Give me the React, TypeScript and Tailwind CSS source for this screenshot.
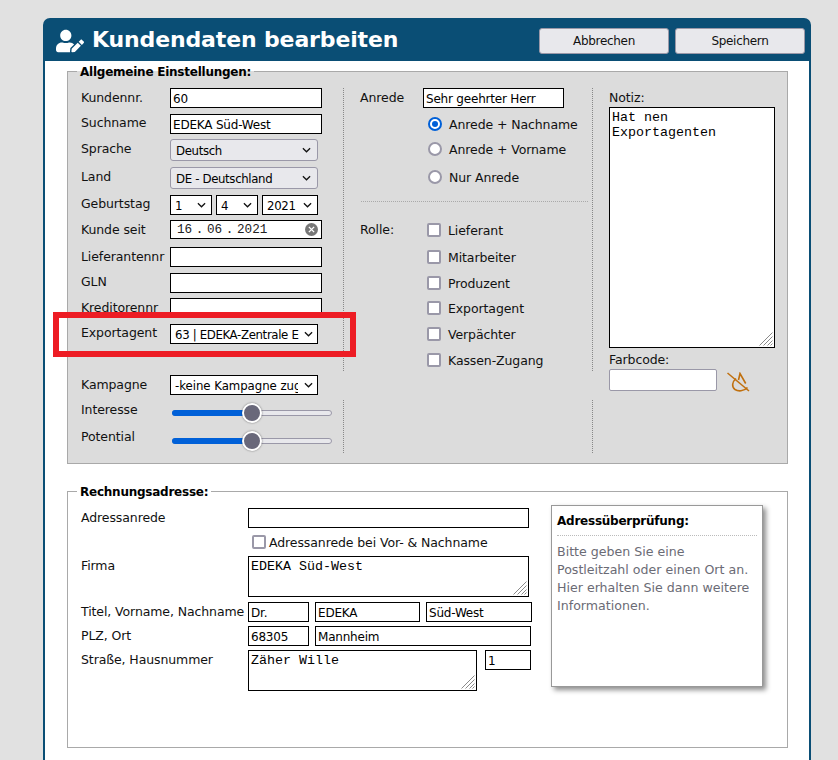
import { FaUserEdit } from "react-icons/fa";

const txt = "text-[12.5px] leading-[18px] tracking-[-0.1px]";
const legendCls = "ml-[9px] h-[15px] px-[3px] text-[12px] font-bold leading-[17px] tracking-[-0.24px] text-black";
const inputCls =
  "block h-5 border border-black bg-white px-[2px] pt-[2px] text-[12px] leading-[16px] tracking-[-0.2px] text-black outline-none";
const monoCls =
  "block resize-none border border-black bg-white px-[2px] py-[2px] font-['Liberation_Mono',monospace] text-[13.33px] leading-[15px] text-black outline-none";

function Chevron({ className }: { className: string }) {
  return (
    <svg viewBox="0 0 10 6" className={className} fill="none" stroke="#111" strokeWidth="1.4">
      <path d="M1 1l4 4 4-4" />
    </svg>
  );
}

function Grip() {
  return (
    <svg viewBox="0 0 14 14" className="pointer-events-none absolute bottom-[2px] right-[2px] h-[14px] w-[14px]" stroke="#8a8a8a" strokeWidth="1">
      <path d="M0.5 13.5L13.5 0.5M4.5 13.5L13.5 4.5M8.5 13.5L13.5 8.5M11.5 13.5L13.5 11.5" />
    </svg>
  );
}

function Area({ value, box }: { value: string; box: string }) {
  return (
    <div className="relative">
      <textarea readOnly value={value} className={`${monoCls} ${box}`} />
      <Grip />
    </div>
  );
}

function Select({
  value,
  box,
  pad,
  chevron,
}: {
  value: string;
  box: string;
  pad: string;
  chevron: string;
}) {
  return (
    <div className="relative">
      <select
        defaultValue={value}
        className={`block appearance-none text-[11.75px] tracking-[-0.35px] text-black outline-none ${box} ${pad}`}
      >
        <option>{value}</option>
      </select>
      <Chevron className={`pointer-events-none absolute top-1/2 h-[6px] w-[9px] -translate-y-1/2 ${chevron}`} />
    </div>
  );
}

function Row({ label, lab, mt, children }: { label: string; lab: string; mt: string; children: React.ReactNode }) {
  return (
    <div className={`flex items-start ${mt}`}>
      <span className={`w-[89px] shrink-0 whitespace-nowrap ${txt} ${lab}`}>{label}</span>
      {children}
    </div>
  );
}

function Radio({ label, checked, mt }: { label: string; checked?: boolean; mt: string }) {
  return (
    <div className={`flex h-[14px] items-center gap-[7px] pl-[84px] ${mt}`}>
      <span
        className={`flex h-[14px] w-[14px] items-center justify-center rounded-full border-2 bg-white ${
          checked ? "border-[#0060d8]" : "border-[#9a98a8]"
        }`}
      >
        {checked && <span className="h-[6px] w-[6px] rounded-full bg-[#0060d8]" />}
      </span>
      <span className={`mt-px whitespace-nowrap ${txt}`}>{label}</span>
    </div>
  );
}

function Check({ label, mt }: { label: string; mt: string }) {
  return (
    <div className={`flex h-[14px] items-center gap-[7px] ${mt}`}>
      <span className="h-[14px] w-[14px] rounded-[2px] border-2 border-[#9a98a8] bg-white" />
      <span className={`mt-px whitespace-nowrap ${txt}`}>{label}</span>
    </div>
  );
}

function Slider() {
  return (
    <div className="relative ml-[2px] mt-[10px] h-[6px] w-[160px] rounded-full border border-[#9a98a8] bg-[#e8e8ec]">
      <div className="absolute -inset-px right-1/2 rounded-l-full bg-[#0060d8]" />
      <div className="absolute left-1/2 top-1/2 h-5 w-5 -translate-x-1/2 -translate-y-1/2 rounded-full border-2 border-white bg-[#69687a] shadow-[0_0_2px_rgba(0,0,0,0.5)]" />
    </div>
  );
}

export default function App() {
  return (
    <div className="relative h-[760px] overflow-hidden bg-[#e1e1e1] pl-[43px] pt-[18px] font-['DejaVu_Sans',sans-serif] text-[#111]">
      <div className="h-[760px] w-[768px] rounded-t-[7px] border-2 border-[#0a4e75] bg-white">
        <header className="flex h-[41px] items-center bg-[#0a4e75] pl-[11px] pr-[4px]">
          <FaUserEdit size={28} color="#fff" className="shrink-0" />
          <h1 className="-mt-[2px] ml-[8px] text-[22px] font-bold leading-7 tracking-[-0.14px] text-white">
            Kundendaten bearbeiten
          </h1>
          <div className="ml-auto mt-[1px] flex gap-[6px]">
            <button className="h-[26px] w-[130px] rounded-[3px] border border-[#9a98a8] bg-[#e8e8ec] text-[12px] tracking-[-0.3px] text-[#111]">
              Abbrechen
            </button>
            <button className="h-[26px] w-[130px] rounded-[3px] border border-[#9a98a8] bg-[#e8e8ec] text-[12px] tracking-[-0.3px] text-[#111]">
              Speichern
            </button>
          </div>
        </header>

        <div className="pl-[22px] pt-[3px]">
          <fieldset className="h-[400px] w-[721px] border border-[#a9a9a9] bg-[#dcdcdc]">
            <legend className={legendCls}>Allgemeine Einstellungen:</legend>
            <div className="mt-[9px] flex h-[283px]">
              <div className="w-[276px] border-r border-dotted border-[#888] pl-[13px]">
                <Row label="Kundennr." lab="mt-px" mt="">
                  <input readOnly value="60" className={`${inputCls} w-[152px]`} />
                </Row>
                <Row label="Suchname" lab="" mt="mt-[6px]">
                  <input readOnly value="EDEKA Süd-West" className={`${inputCls} w-[152px]`} />
                </Row>
                <Row label="Sprache" lab="mt-px" mt="mt-[5px]">
                  <Select
                    value="Deutsch"
                    box="h-[22px] w-[148px] rounded-[3px] border border-[#9a98a8] bg-[#e8e8ec]"
                    pad="pl-[5px] pr-5 pt-[3px]"
                    chevron="right-[7px]"
                  />
                </Row>
                <Row label="Land" lab="mt-px" mt="mt-[6px]">
                  <Select
                    value="DE - Deutschland"
                    box="h-[22px] w-[148px] rounded-[3px] border border-[#9a98a8] bg-[#e8e8ec]"
                    pad="pl-[5px] pr-5 pt-[3px]"
                    chevron="right-[7px]"
                  />
                </Row>
                <Row label="Geburtstag" lab="" mt="mt-[6px]">
                  <div className="flex gap-1">
                    <Select value="1" box="h-5 w-[42px] border border-black bg-white" pad="pl-1 pr-4 pt-[2px]" chevron="right-[6px]" />
                    <Select value="4" box="h-5 w-[42px] border border-black bg-white" pad="pl-1 pr-4 pt-[2px]" chevron="right-[6px]" />
                    <Select value="2021" box="h-5 w-[56px] border border-black bg-white" pad="pl-1 pr-4 pt-[2px]" chevron="right-[6px]" />
                  </div>
                </Row>
                <Row label="Kunde seit" lab="mt-px" mt="mt-[5px]">
                  <div className="relative">
                    <input
                      readOnly
                      value="16 . 06 . 2021"
                      className="block h-[19px] w-[152px] border border-black bg-white pl-[6px] font-['Liberation_Mono',monospace] text-[12.67px] text-[#222] outline-none [word-spacing:-4px]"
                    />
                    <span className="absolute right-[4px] top-[3px] flex h-[13px] w-[13px] items-center justify-center rounded-full bg-[#777]">
                      <svg viewBox="0 0 8 8" className="h-[7px] w-[7px]" stroke="#fff" strokeWidth="1.6">
                        <path d="M1 1l6 6M7 1L1 7" />
                      </svg>
                    </span>
                  </div>
                </Row>
                <Row label="Lieferantennr" lab="mt-px" mt="mt-[8px]">
                  <input readOnly className={`${inputCls} w-[152px]`} />
                </Row>
                <Row label="GLN" lab="" mt="mt-[6px]">
                  <input readOnly className={`${inputCls} w-[152px]`} />
                </Row>
                <Row label="Kreditorennr" lab="mt-px" mt="mt-[5px]">
                  <input readOnly className={`${inputCls} w-[152px]`} />
                </Row>
                <Row label="Exportagent" lab="" mt="mt-[6px]">
                  <Select
                    value="63 | EDEKA-Zentrale EDEKA-Zentrale"
                    box="h-5 w-[148px] border border-black bg-white"
                    pad="pl-1 pr-[18px] pt-[2px]"
                    chevron="right-[5px]"
                  />
                </Row>
              </div>

              <div className="w-[249px] border-r border-dotted border-[#888]">
                <div className="flex items-start pl-4">
                  <span className={`mt-px w-[63px] ${txt}`}>Anrede</span>
                  <input readOnly value="Sehr geehrter Herr" className={`${inputCls} w-[141px]`} />
                </div>
                <Radio label="Anrede + Nachname" checked mt="mt-[9px]" />
                <Radio label="Anrede + Vorname" mt="mt-[11px]" />
                <Radio label="Nur Anrede" mt="mt-[14px]" />
                <div className="ml-[17px] mt-[17px] w-[227px] border-t border-dotted border-[#aaa]" />
                <div className="flex items-start pl-4 pt-[21px]">
                  <span className={`-mt-[2px] w-[67px] ${txt}`}>Rolle:</span>
                  <div>
                    <Check label="Lieferant" mt="" />
                    <Check label="Mitarbeiter" mt="mt-[13px]" />
                    <Check label="Produzent" mt="mt-3" />
                    <Check label="Exportagent" mt="mt-[11px]" />
                    <Check label="Verpächter" mt="mt-3" />
                    <Check label="Kassen-Zugang" mt="mt-3" />
                  </div>
                </div>
              </div>

              <div className="pl-4">
                <div className={`h-[19px] pt-px ${txt}`}>Notiz:</div>
                <Area value={"Hat nen\nExportagenten"} box="h-[241px] w-[166px]" />
                <div className={`mt-[3px] h-[18px] ${txt}`}>Farbcode:</div>
                <div className="flex items-start">
                  <input readOnly className="block h-[22px] w-[108px] rounded-[2px] border border-[#9a98a8] bg-white outline-none" />
                  <svg viewBox="0 0 23 20" className="ml-[10px] mt-[3px] h-[20px] w-[23px]" fill="none" stroke="#c0700f" strokeWidth="1.6">
                    <path d="M0.5 1L22 19" />
                    <path d="M11.5 8L13 1.5L18.7 11.5" />
                    <path d="M9 6.5C5 10 4.5 15 8 17.5C11 19.5 17 19.5 20.5 15.5" />
                  </svg>
                </div>
              </div>
            </div>

            <div className="mt-[4px] flex pl-[13px]">
              <span className={`mt-px w-[89px] ${txt}`}>Kampagne</span>
              <Select
                value="-keine Kampagne zugeordnet"
                box="h-5 w-[148px] border border-black bg-white !tracking-[-0.05px]"
                pad="pl-1 pr-[19px] pt-[2px]"
                chevron="right-[5px]"
              />
            </div>

            <div className="mt-[5px] flex h-[53px]">
              <div className="w-[276px] border-r border-dotted border-[#888] pl-[13px]">
                <div className="flex">
                  <span className={`mt-px w-[89px] ${txt}`}>Interesse</span>
                  <Slider />
                </div>
                <div className="mt-[9px] flex">
                  <span className={`w-[89px] ${txt}`}>Potential</span>
                  <Slider />
                </div>
              </div>
              <div className="w-[249px] border-r border-dotted border-[#888]" />
            </div>
          </fieldset>

          <fieldset className="mt-5 h-[264px] w-[721px] border border-[#a9a9a9] bg-white">
            <legend className={legendCls}>Rechnungsadresse:</legend>
            <div className="flex pl-[13px]">
              <div className="w-[451px] pt-[9px]">
                <div className="flex items-start">
                  <span className={`mt-px w-[167px] ${txt}`}>Adressanrede</span>
                  <input readOnly className={`${inputCls} w-[281px]`} />
                </div>
                <div className="ml-[171px] mt-[7px] flex h-[14px] items-center gap-[3px]">
                  <span className="h-[14px] w-[14px] rounded-[2px] border-2 border-[#9a98a8] bg-white" />
                  <span className={`mt-px whitespace-nowrap ${txt}`}>Adressanrede bei Vor- &amp; Nachname</span>
                </div>
                <div className="mt-[7px] flex items-start">
                  <span className={`mt-px w-[167px] ${txt}`}>Firma</span>
                  <Area value="EDEKA Süd-West" box="h-[41px] w-[281px]" />
                </div>
                <div className="mt-[5px] flex items-start">
                  <span className={`mt-px w-[167px] whitespace-nowrap ${txt}`}>Titel, Vorname, Nachname</span>
                  <input readOnly value="Dr." className={`${inputCls} w-[61px]`} />
                  <input readOnly value="EDEKA" className={`${inputCls} ml-[6px] w-[105px]`} />
                  <input readOnly value="Süd-West" className={`${inputCls} ml-[6px] w-[106px]`} />
                </div>
                <div className="mt-1 flex items-start">
                  <span className={`mt-px w-[167px] ${txt}`}>PLZ, Ort</span>
                  <input readOnly value="68305" className={`${inputCls} w-[61px]`} />
                  <input readOnly value="Mannheim" className={`${inputCls} ml-[6px] w-[216px]`} />
                </div>
                <div className="mt-1 flex items-start">
                  <span className={`mt-px w-[167px] ${txt}`}>Straße, Hausnummer</span>
                  <Area value="Zäher Wille" box="h-[41px] w-[229px]" />
                  <input readOnly value="1" className={`${inputCls} ml-2 w-[46px]`} />
                </div>
              </div>

              <aside className="ml-[19px] mt-[6px] h-[182px] w-[212px] border border-[#999] bg-white px-[5px] pt-[7px] shadow-[3px_3px_5px_rgba(0,0,0,0.45)]">
                <div className="text-[12px] font-bold leading-4 tracking-[-0.24px] text-black">Adressüberprüfung:</div>
                <div className="mt-[6px] border-t border-dotted border-[#bbb]" />
                <p className="mt-[7px] text-[12.6px] leading-[18px] text-[#6b6b75]">
                  Bitte geben Sie eine Postleitzahl oder einen Ort an. Hier erhalten Sie dann weitere Informationen.
                </p>
              </aside>
            </div>
          </fieldset>
        </div>
      </div>

      <div className="pointer-events-none absolute left-[53px] top-[312px] h-[45px] w-[303px] border-[6px] border-[#ed1c24]" />
    </div>
  );
}
